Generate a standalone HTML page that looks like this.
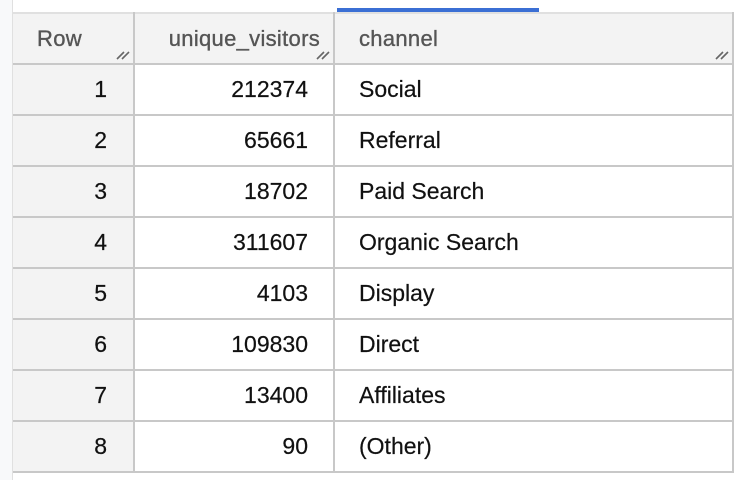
<!DOCTYPE html><html><head><style>
body{margin:0;width:747px;height:480px;background:#fff;position:relative;overflow:hidden;font-family:"Liberation Sans",Arial,sans-serif}
.strip{position:absolute;left:0;top:0;width:12px;height:480px;background:#f8f9fa;border-right:1px solid #e0e0e0}
.blue{position:absolute;left:337px;top:8px;width:202px;height:4px;background:#3b6fd4}
table{position:absolute;left:13px;top:12px;border-collapse:collapse;table-layout:fixed}
td,th{height:50px;padding:0;font-size:23px;border-bottom:2px solid #c8c8c8;border-right:2px solid #c8c8c8;box-sizing:border-box;white-space:nowrap}
th{background:#f3f3f3;color:#555;font-weight:normal;-webkit-text-stroke:0.35px #555;border-top:2px solid #e0e0e0;position:relative;height:51px;font-size:22px;letter-spacing:0.3px}
td{color:#111;height:51px;-webkit-text-stroke:0.2px #111}
.r{background:#f3f3f3;text-align:right;padding-right:26px}
.n{text-align:right;padding-right:25px}
.c{text-align:left;padding-left:24px}
.g{position:absolute;right:3px;bottom:3px;width:14px;height:10px}
</style></head><body>
<div class="strip"></div><div class="blue"></div>
<table>
<colgroup><col style="width:121px"><col style="width:200px"><col style="width:399px"></colgroup>
<tr><th style="text-align:left;padding-left:24px">Row<svg class="g" viewBox="0 0 14 10"><path d="M1 9L8 2M6 9L13 2" stroke="#666" stroke-width="1.6"/></svg></th>
<th style="text-align:right;padding-right:13px">unique_visitors<svg class="g" viewBox="0 0 14 10"><path d="M1 9L8 2M6 9L13 2" stroke="#666" stroke-width="1.6"/></svg></th>
<th class="c">channel<svg class="g" viewBox="0 0 14 10"><path d="M1 9L8 2M6 9L13 2" stroke="#666" stroke-width="1.6"/></svg></th></tr>
<tr><td class="r">1</td><td class="n">212374</td><td class="c">Social</td></tr>
<tr><td class="r">2</td><td class="n">65661</td><td class="c">Referral</td></tr>
<tr><td class="r">3</td><td class="n">18702</td><td class="c">Paid Search</td></tr>
<tr><td class="r">4</td><td class="n">311607</td><td class="c">Organic Search</td></tr>
<tr><td class="r">5</td><td class="n">4103</td><td class="c">Display</td></tr>
<tr><td class="r">6</td><td class="n">109830</td><td class="c">Direct</td></tr>
<tr><td class="r">7</td><td class="n">13400</td><td class="c">Affiliates</td></tr>
<tr><td class="r">8</td><td class="n">90</td><td class="c">(Other)</td></tr>
</table>
</body></html>
